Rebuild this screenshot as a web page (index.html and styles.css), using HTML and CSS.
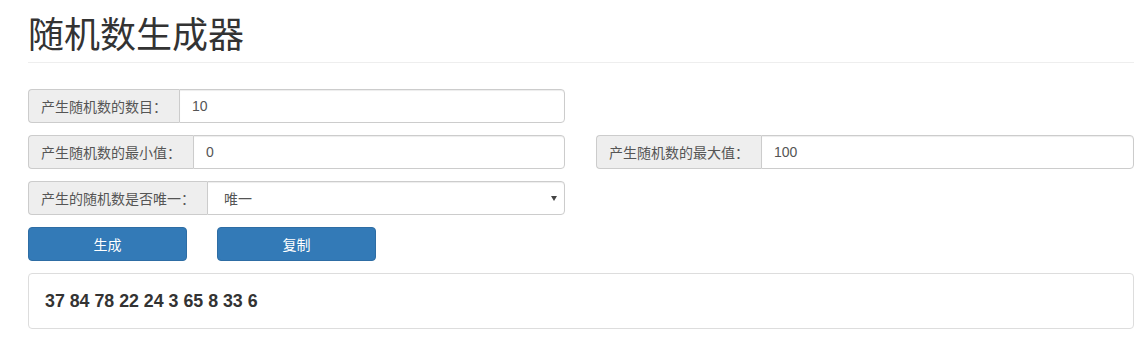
FILE: index.html
```html
<!DOCTYPE html>
<html>
<head>
  <meta charset="utf-8">
  <title>随机数生成器</title>
  <link rel="stylesheet" href="styles.css">
</head>
<body>
  <div class="page">
    <h1 class="title">随机数生成器</h1>
    <form class="gen-form">
      <div class="input-group">
        <span class="addon">产生随机数的数目：</span>
        <input class="field" type="text" value="10">
      </div>
      <div></div>
      <div class="input-group">
        <span class="addon">产生随机数的最小值：</span>
        <input class="field" type="text" value="0">
      </div>
      <div class="input-group">
        <span class="addon">产生随机数的最大值：</span>
        <input class="field" type="text" value="100">
      </div>
      <div class="input-group">
        <span class="addon">产生的随机数是否唯一：</span>
        <div class="select-wrap">
          <select class="field select">
            <option>唯一</option>
            <option>不唯一</option>
          </select>
        </div>
      </div>
      <div></div>
      <div class="buttons">
        <button type="button" class="btn">生成</button>
        <button type="button" class="btn">复制</button>
      </div>
      <div></div>
      <div class="result">37 84 78 22 24 3 65 8 33 6</div>
    </form>
  </div>
</body>
</html>
```

FILE: styles.css
```css
body {
  margin: 0;
  font-family: "Liberation Sans", "Noto Sans CJK SC", sans-serif;
  font-size: 14px;
  color: #333;
  background: #fff;
}
.page {
  width: 1106px;
  margin-left: 28px;
  padding-top: 12px;
}
.title {
  margin: 0;
  font-family: "Noto Sans CJK SC", sans-serif;
  font-size: 36px;
  font-weight: 400;
  line-height: 40px;
  color: #333;
  padding-bottom: 10px;
  border-bottom: 1px solid #eee;
}
.gen-form {
  margin-top: 26px;
  display: grid;
  grid-template-columns: 537px 538px;
  column-gap: 31px;
  row-gap: 12px;
}
.input-group {
  display: flex;
  height: 34px;
}
.addon {
  display: flex;
  align-items: center;
  padding: 0 12px;
  background: #eee;
  border: 1px solid #ccc;
  border-right: none;
  border-radius: 4px 0 0 4px;
  color: #555;
  font-family: "Noto Sans CJK SC", sans-serif;
  font-size: 14px;
  white-space: nowrap;
}
.field {
  flex: 1;
  min-width: 0;
  box-sizing: border-box;
  height: 34px;
  margin: 0;
  padding: 0 12px;
  border: 1px solid #ccc;
  border-radius: 0 4px 4px 0;
  box-shadow: inset 0 1px 1px rgba(0, 0, 0, .075);
  font-family: "Liberation Sans", "Noto Sans CJK SC", sans-serif;
  font-size: 14px;
  color: #555;
  background: #fff;
  outline: none;
}
.select-wrap {
  flex: 1;
  display: flex;
  position: relative;
}
.select {
  appearance: none;
  -webkit-appearance: none;
  padding-left: 16px;
  font-family: "Noto Sans CJK SC", sans-serif;
}
.select-wrap::after {
  content: "";
  position: absolute;
  right: 8px;
  top: 15px;
  border-left: 3px solid transparent;
  border-right: 3px solid transparent;
  border-top: 5px solid #444;
}
.buttons {
  display: flex;
  gap: 30px;
}
.btn {
  width: 159px;
  height: 34px;
  background: #337ab7;
  border: 1px solid #2e6da4;
  border-radius: 4px;
  color: #fff;
  font-family: "Noto Sans CJK SC", sans-serif;
  font-size: 14px;
  cursor: pointer;
}
.result {
  grid-column: 1 / 3;
  height: 56px;
  box-sizing: border-box;
  display: flex;
  align-items: center;
  padding: 0 16px;
  border: 1px solid #ddd;
  border-radius: 4px;
  font-size: 17.8px;
  font-weight: 700;
  color: #333;
}
```
